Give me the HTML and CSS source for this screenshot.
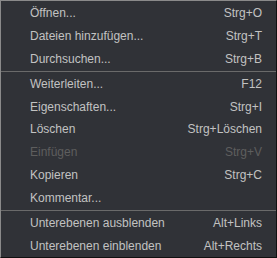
FILE: index.html
```html
<!DOCTYPE html>
<html>
<head>
<meta charset="utf-8">
<link rel="stylesheet" href="styles.css">
</head>
<body>
<div class="menu">
  <div class="item"><span>Öffnen...</span><span>Strg+O</span></div>
  <div class="item"><span>Dateien hinzufügen...</span><span>Strg+T</span></div>
  <div class="item"><span>Durchsuchen...</span><span>Strg+B</span></div>
  <div class="sep"></div>
  <div class="item"><span>Weiterleiten...</span><span>F12</span></div>
  <div class="item"><span>Eigenschaften...</span><span>Strg+I</span></div>
  <div class="item"><span>Löschen</span><span>Strg+Löschen</span></div>
  <div class="item disabled"><span>Einfügen</span><span>Strg+V</span></div>
  <div class="item"><span>Kopieren</span><span>Strg+C</span></div>
  <div class="item"><span>Kommentar...</span><span></span></div>
  <div class="sep"></div>
  <div class="item"><span>Unterebenen ausblenden</span><span>Alt+Links</span></div>
  <div class="item"><span>Unterebenen einblenden</span><span>Alt+Rechts</span></div>
</div>
</body>
</html>
```
FILE: styles.css
```css
html, body {
  margin: 0;
  padding: 0;
  background: #303237;
}
.menu {
  width: 277px;
  height: 258px;
  box-sizing: border-box;
  background: #303237;
  border-top: 1px solid #8a8a8a;
  border-left: 1px solid #8a8a8a;
  border-right: 1px solid #101010;
  border-bottom: 1px solid #101010;
  font-family: "Liberation Sans", Arial, sans-serif;
  font-size: 12px;
  color: #c2c2c2;
  display: flex;
  flex-direction: column;
}
.item {
  height: 23px;
  box-sizing: border-box;
  display: flex;
  align-items: center;
  justify-content: space-between;
  padding: 1px 14px 0 29px;
}
.item.disabled {
  color: #5e5e5e;
}
.sep {
  height: 1px;
  background: #6a6a6a;
  margin: 1px 0 0 0;
}
```
